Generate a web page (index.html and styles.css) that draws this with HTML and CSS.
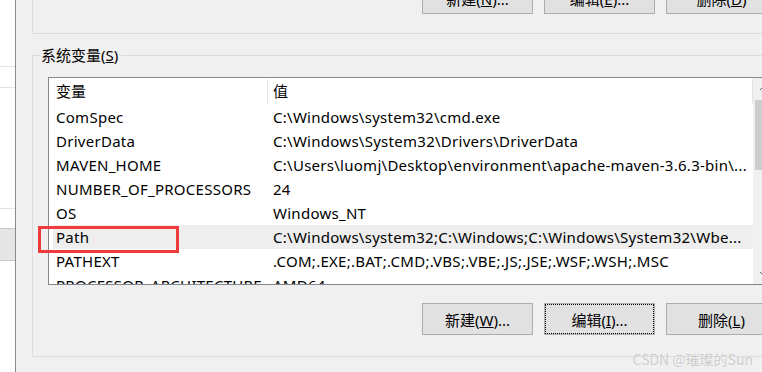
FILE: index.html
```html
<!DOCTYPE html>
<html>
	<head>
		<meta charset="UTF-8">
		<title>环境变量</title>
		<link rel="stylesheet" href="styles.css">
	</head>
	<body>
		<div class="screen">
			<div class="behind">
				<div class="strip s1"></div>
				<div class="strip s2"></div>
				<div class="strip s3"></div>
				<div class="strip s4"></div>
				<div class="strip band"></div>
			</div>
			<div class="dialog">
				<div class="user-group">
					<div class="btn-row top">
						<button class="btn">新建(<u>N</u>)...</button>
						<button class="btn">编辑(<u>E</u>)...</button>
						<button class="btn">删除(<u>D</u>)</button>
					</div>
				</div>
				<fieldset class="sys-group">
					<legend>系统变量(<u>S</u>)</legend>
					<div class="listview">
						<div class="lv-main">
							<div class="lv-head">
								<div class="hcell name">变量</div>
								<div class="hcell value">值</div>
							</div>
							<div class="lv-rows">
								<div class="row"><div class="cell name">ComSpec</div><div class="cell value">C:\Windows\system32\cmd.exe</div></div>
								<div class="row"><div class="cell name">DriverData</div><div class="cell value">C:\Windows\System32\Drivers\DriverData</div></div>
								<div class="row"><div class="cell name">MAVEN_HOME</div><div class="cell value">C:\Users\luomj\Desktop\environment\apache-maven-3.6.3-bin\...</div></div>
								<div class="row"><div class="cell name">NUMBER_OF_PROCESSORS</div><div class="cell value">24</div></div>
								<div class="row"><div class="cell name">OS</div><div class="cell value">Windows_NT</div></div>
								<div class="row selected"><div class="cell name">Path</div><div class="cell value">C:\Windows\system32;C:\Windows;C:\Windows\System32\Wbe...</div></div>
								<div class="row"><div class="cell name">PATHEXT</div><div class="cell value">.COM;.EXE;.BAT;.CMD;.VBS;.VBE;.JS;.JSE;.WSF;.WSH;.MSC</div></div>
								<div class="row"><div class="cell name">PROCESSOR_ARCHITECTURE</div><div class="cell value">AMD64</div></div>
							</div>
						</div>
						<div class="vscroll">
							<div class="arrow">
								<svg width="21" height="21" viewBox="0 0 21 21"><polyline points="7,12 10.5,8.5 14,12" fill="none" stroke="#606060" stroke-width="1"/></svg>
							</div>
							<div class="thumb"></div>
							<div class="track"></div>
							<div class="arrow">
								<svg width="21" height="21" viewBox="0 0 21 21"><polyline points="7,9 10.5,12.5 14,9" fill="none" stroke="#606060" stroke-width="1"/></svg>
							</div>
						</div>
					</div>
					<div class="btn-row bottom">
						<button class="btn">新建(<u>W</u>)...</button>
						<button class="btn focused">编辑(<u>I</u>)...</button>
						<button class="btn">删除(<u>L</u>)</button>
					</div>
				</fieldset>
			</div>
			<div class="mark"></div>
			<div class="watermark">CSDN @璀璨的Sun</div>
		</div>
	</body>
</html>
```

FILE: styles.css
```css
html,body {
	margin: 0;
	padding: 0;
}
body {
	font-family: "Noto Sans", "Noto Sans CJK SC", sans-serif;
	font-size: 15px;
	color: #000;
	background: #f0f0f0;
}
.screen {
	position: relative;
	width: 762px;
	height: 372px;
	overflow: hidden;
	display: flex;
}
.behind {
	width: 15px;
	flex: none;
	background: #fff;
}
.strip {
	border-bottom: 1px solid #e3e3e3;
}
.s1 {
	height: 66px;
}
.s2 {
	height: 20px;
}
.s3 {
	height: 120px;
}
.s4 {
	height: 19px;
	border-bottom: 0;
}
.band {
	height: 31px;
	background: #e6e6e6;
	border-top: 1px solid #c9c9c9;
	border-bottom: 1px solid #c9c9c9;
}
.dialog {
	width: 800px;
	flex: none;
	border-left: 1px solid #8a8a8a;
	background: #f0f0f0;
}
.user-group {
	display: flow-root;
	height: 33px;
	margin-left: 16px;
	border-left: 1px solid #dcdcdc;
	border-bottom: 1px solid #dcdcdc;
}
.btn-row {
	display: flex;
	gap: 11px;
	margin-left: 389px;
}
.btn-row.top {
	margin-top: -18px;
}
.btn {
	width: 111px;
	height: 32px;
	flex: none;
	padding: 0;
	background: #e1e1e1;
	border: 1px solid #adadad;
	font-family: "Noto Sans", "Noto Sans CJK SC", sans-serif;
	font-size: 15px;
	color: #000;
}
.btn.focused {
	outline: 1px dotted #000;
	outline-offset: -2px;
}
.sys-group {
	margin: 11px 0 0 16px;
	padding: 0 0 21px 0;
	border: 1px solid #dcdcdc;
	min-width: 0;
}
.sys-group legend {
	margin-left: 7px;
	padding: 0 3px 0 1px;
	line-height: 20px;
	font-size: 15px;
}
.listview {
	display: flex;
	margin: 12px 0 0 15px;
	width: 725px;
	height: 206px;
	border: 1px solid #828790;
	background: #fff;
}
.lv-main {
	width: 704px;
	flex: none;
	overflow: hidden;
}
.lv-head {
	display: flex;
	height: 27px;
}
.hcell {
	line-height: 27px;
}
.hcell.name {
	width: 211px;
	padding-left: 7px;
}
.hcell.value {
	flex: 1;
	margin: 1px 0 1px 0;
	line-height: 25px;
	padding-left: 5px;
	border-left: 1px solid #e5e5e5;
	border-right: 1px solid #e5e5e5;
}
.row {
	display: flex;
	margin-left: 4px;
	height: 24px;
	line-height: 24px;
	white-space: nowrap;
	letter-spacing: 0.27px;
}
.row.selected {
	background: #eeeeee;
}
.cell.name {
	width: 211px;
	padding-left: 3px;
}
.cell.value {
	flex: 1;
	padding-left: 6px;
	overflow: hidden;
}
.vscroll {
	width: 21px;
	flex: none;
	display: flex;
	flex-direction: column;
	background: #f0f0f0;
}
.arrow {
	height: 21px;
}
.arrow svg {
	display: block;
}
.thumb {
	height: 70px;
	margin: 1px 2px 0 2px;
	background: #cdcdcd;
}
.track {
	flex: 1;
}
.btn-row.bottom {
	margin-top: 18px;
}
.mark {
	position: absolute;
	left: 38px;
	top: 226px;
	width: 141px;
	height: 27px;
	box-sizing: border-box;
	border: 3px solid #ef3b3b;
}
.watermark {
	position: absolute;
	right: 9px;
	top: 349px;
	font-family: "Noto Sans CJK SC", sans-serif;
	font-size: 14px;
	color: #cbcbcb;
	text-shadow: 0 0 1px #fff;
}
```
